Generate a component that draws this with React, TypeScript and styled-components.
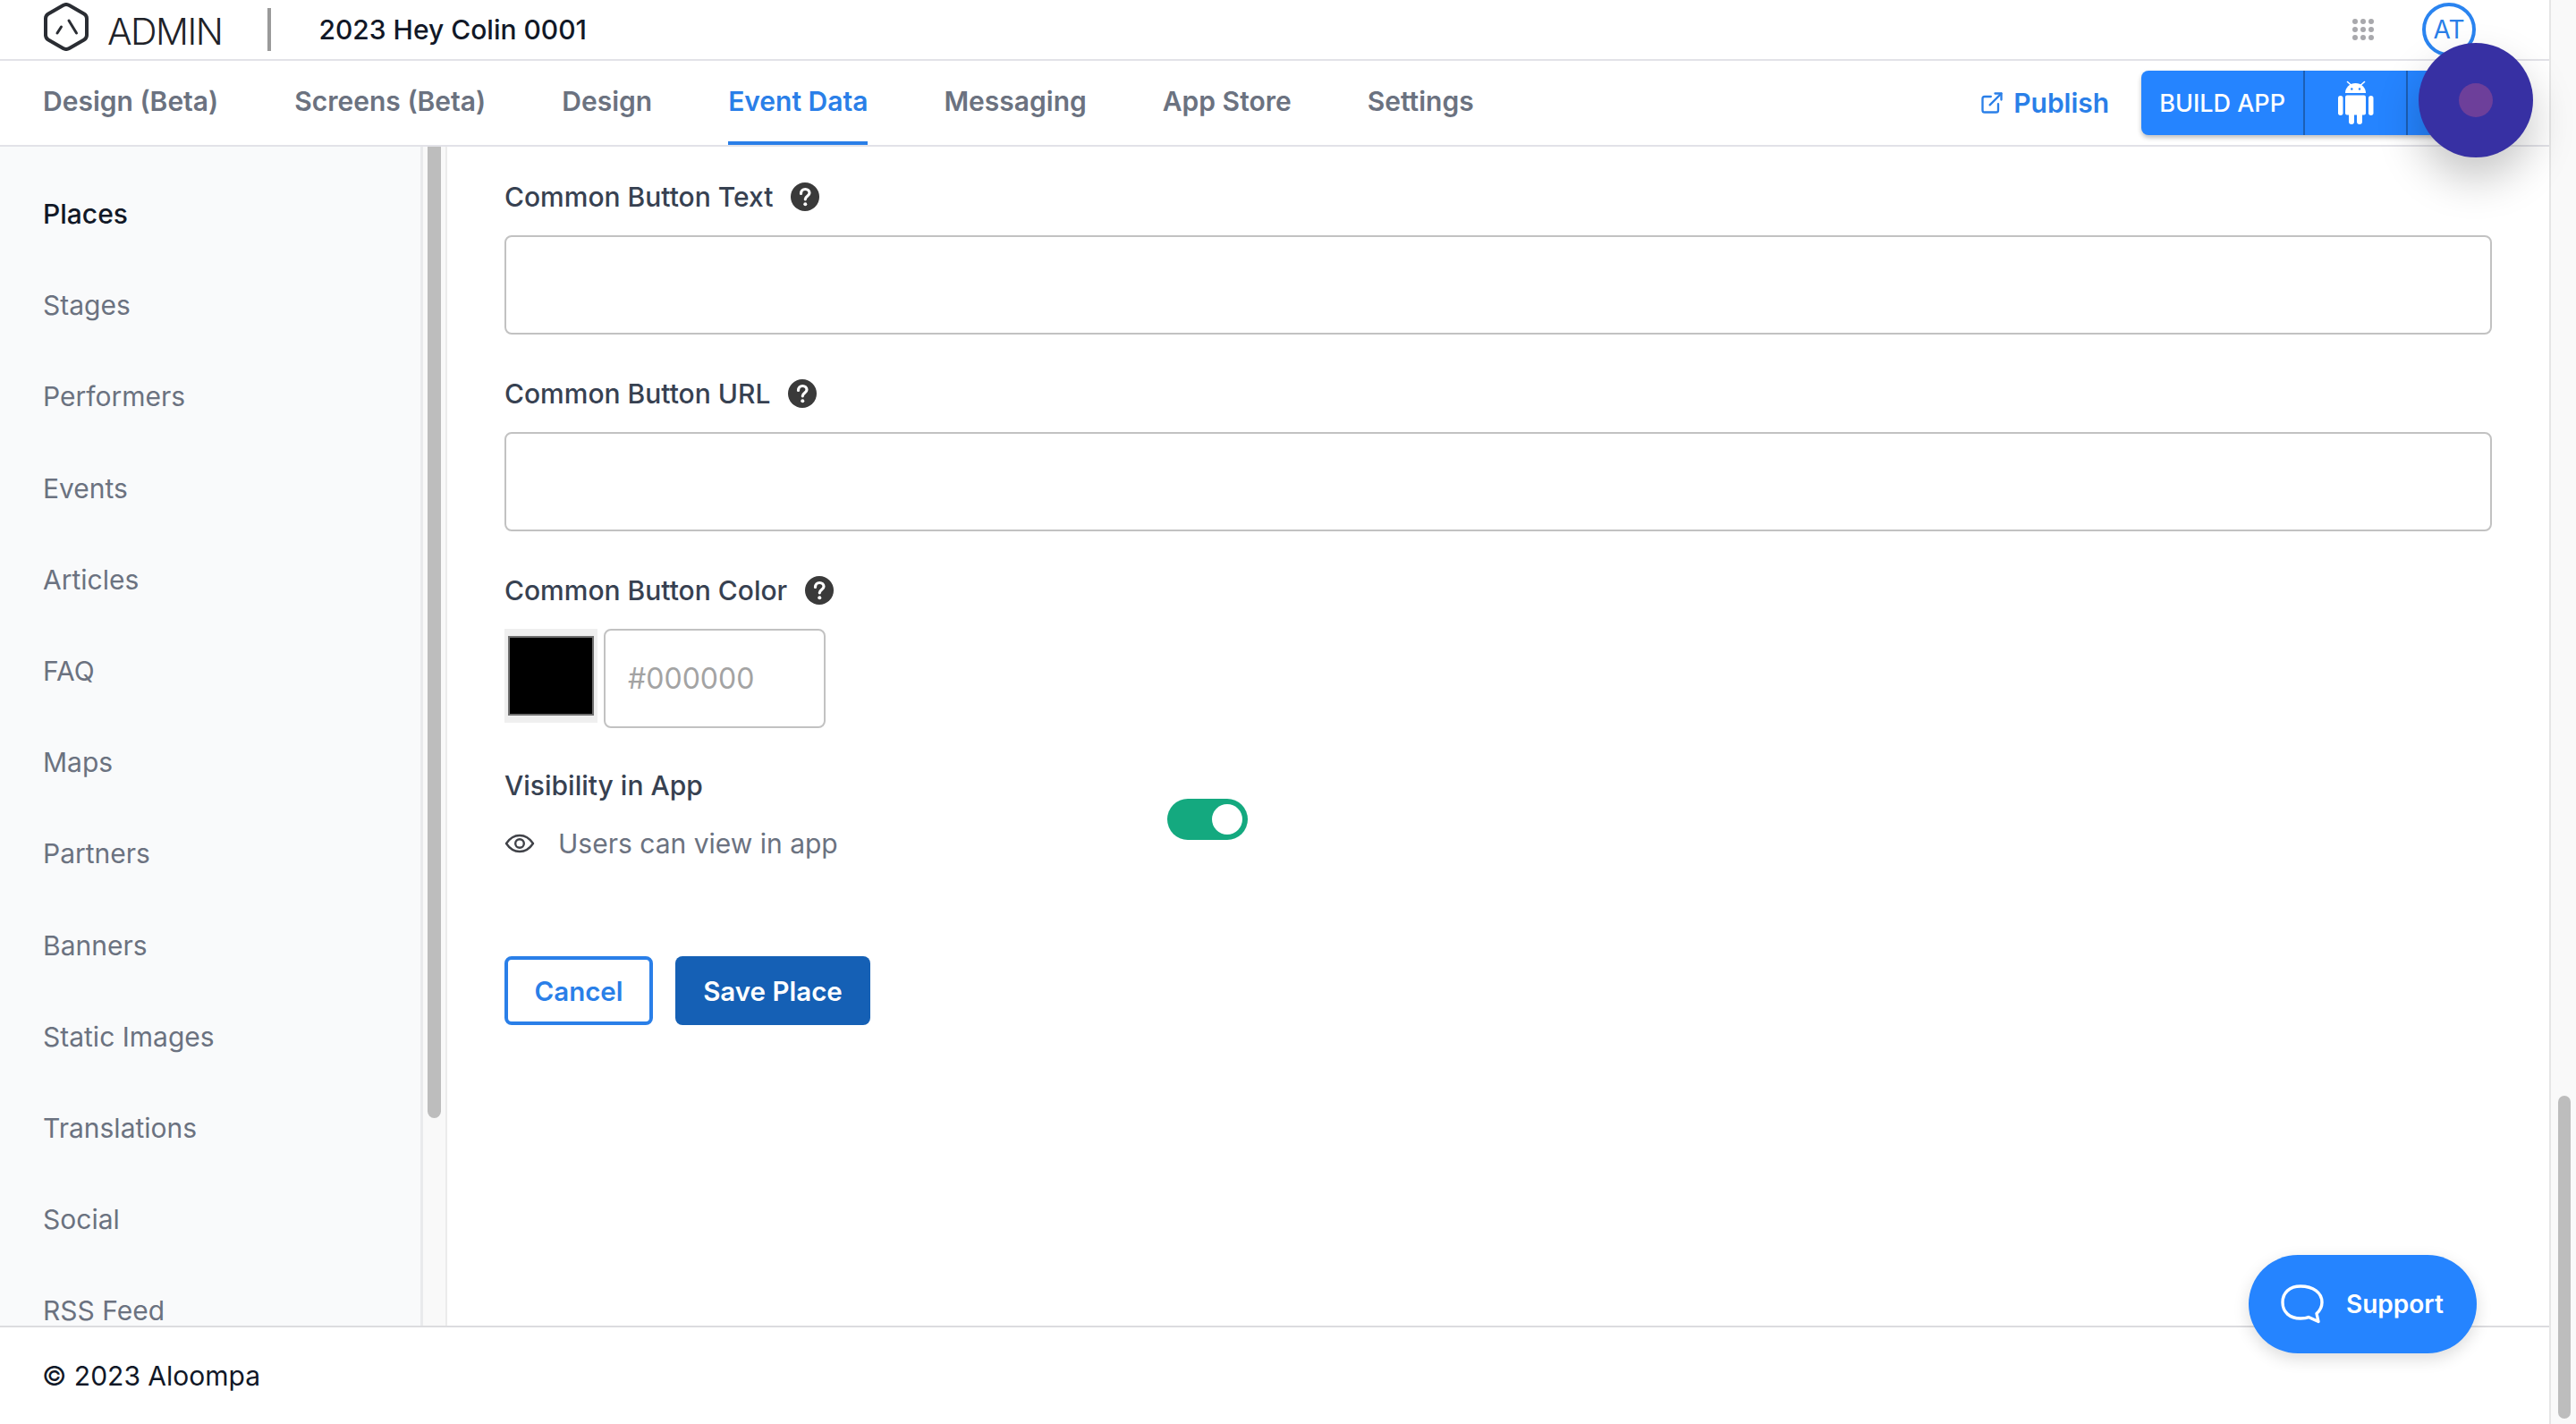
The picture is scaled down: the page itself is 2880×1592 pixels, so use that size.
import * as React from "react";
import styled, { createGlobalStyle } from "styled-components";
import { ExternalLink } from "lucide-react";

const GlobalStyle = createGlobalStyle`
  html, body, #root {
    margin: 0;
    height: 100%;
    background: #ffffff;
  }
  body {
    overflow: hidden;
    font-family: Inter, "Noto Sans", sans-serif;
  }
  * {
    box-sizing: border-box;
  }
`;

const Page = styled("div")`
  position: relative;
  display: flex;
  width: 2880px;
  height: 1592px;
  overflow: hidden;
`;

const Shell = styled("div")`
  display: flex;
  flex-direction: column;
  width: 2850px;
  height: 100%;
`;

const PageTrack = styled("div")`
  width: 30px;
  height: 100%;
  padding: 1225px 6px 6px 8px;
  background: #f9f9f9;
  border-left: 2px solid #e6e6e6;
`;

const Thumb = styled("div")`
  height: 100%;
  border-radius: 8px;
  background: #bdbdbd;
`;

const TopBar = styled("header")`
  display: flex;
  align-items: center;
  flex: none;
  height: 68px;
  padding: 0 82px 0 47px;
  border-bottom: 2px solid #e2e2e8;
`;

const Brand = styled("div")`
  display: flex;
  align-items: center;
  gap: 19px;
  padding-right: 51px;
`;

const LogoMark = styled("svg")`
  margin-top: -6px;
`;

const BrandName = styled("span")`
  padding-top: 4px;
  font-size: 41px;
  font-weight: 300;
  letter-spacing: -1.5px;
  color: #1f2329;
`;

const Divider = styled("div")`
  width: 4px;
  height: 48px;
  background: #9a9a9a;
`;

const EventTitle = styled("div")`
  margin-left: 53px;
  font-size: 30px;
  font-weight: 500;
  color: #111827;
`;

const TopActions = styled("div")`
  display: flex;
  align-items: center;
  gap: 54px;
  margin-left: auto;
`;

const AppsGrid = styled("div")`
  display: grid;
  grid-template-columns: repeat(3, 6px);
  grid-auto-rows: 6px;
  gap: 3px;
`;

const AppsDot = styled("span")`
  border-radius: 50%;
  background: #a8a8ac;
`;

const Avatar = styled("div")`
  display: flex;
  align-items: center;
  justify-content: center;
  width: 60px;
  height: 60px;
  border: 4px solid #2a84f0;
  border-radius: 50%;
  font-size: 28px;
  color: #2a7fe8;
`;

const NavBar = styled("nav")`
  display: flex;
  align-items: stretch;
  flex: none;
  height: 96px;
  padding: 0 0 0 48px;
  border-bottom: 2px solid #e2e2e8;
`;

const NavTabs = styled("div")`
  display: flex;
  gap: 85px;
`;

const NavTab = styled("a")<{ $active?: boolean }>`
  display: flex;
  align-items: center;
  height: 94px;
  font-size: 30px;
  font-weight: 600;
  color: ${({ $active }) => ($active ? "#2a7fe8" : "#6b7280")};
  border-bottom: 4px solid ${({ $active }) => ($active ? "#2a7fe8" : "transparent")};
`;

const PublishLink = styled("a")`
  display: flex;
  align-items: center;
  gap: 10px;
  margin-left: auto;
  font-size: 30px;
  font-weight: 600;
  color: #2a7fe8;
`;

const BuildGroup = styled("div")`
  display: flex;
  align-self: center;
  height: 72px;
  margin-left: 36px;
  margin-right: 45px;
  border-radius: 8px;
  background: #2584ff;
  box-shadow: 0 3px 5px rgba(0, 0, 0, 0.25);
  color: #ffffff;
`;

const BuildLabel = styled("div")`
  display: flex;
  align-items: center;
  padding: 0 20px;
  font-size: 27px;
  font-weight: 500;
`;

const BuildPlatform = styled("div")`
  display: flex;
  align-items: center;
  justify-content: center;
  width: 115px;
  border-left: 2px solid #1c5fb5;
`;

const Body = styled("div")`
  display: flex;
  flex: 1;
  min-height: 0;
`;

const Sidebar = styled("aside")`
  width: 473px;
  padding-top: 24px;
  overflow: hidden;
  background: #f9fafb;
  border-right: 3px solid #e9eaec;
`;

const SideItem = styled("div")<{ $active?: boolean }>`
  display: flex;
  align-items: center;
  flex: none;
  height: 102.2px;
  padding-left: 48px;
  font-size: 30px;
  font-weight: ${({ $active }) => ($active ? 500 : 400)};
  color: ${({ $active }) => ($active ? "#111827" : "#6b7280")};
`;

const SideTrack = styled("div")`
  width: 27px;
  padding: 0 5px 232px 5px;
  background: #f9f9f9;
  border-right: 2px solid #ececec;
`;

const SideThumb = styled("div")`
  height: 100%;
  border-radius: 0 0 8px 8px;
  background: #bdbdbd;
`;

const Main = styled("main")`
  flex: 1;
  padding: 32px 64px 0;
  overflow: hidden;
`;

const Field = styled("div")`
  margin-bottom: 42px;
`;

const FieldLabel = styled("label")`
  display: flex;
  align-items: center;
  gap: 20px;
  height: 48px;
  margin-bottom: 19px;
  font-size: 30px;
  font-weight: 500;
  color: #374151;
`;

const TextBox = styled("input")`
  display: block;
  width: 100%;
  height: 111px;
  padding: 0 25px;
  border: 2px solid #c2c2c2;
  border-radius: 8px;
  background: #ffffff;
  font-family: inherit;
  font-size: 32px;

  &::placeholder {
    color: #a3a3a3;
  }
`;

const ColorRow = styled("div")`
  display: flex;
  align-items: flex-start;
  gap: 7px;
`;

const Swatch = styled("div")`
  flex: none;
  width: 104px;
  height: 105px;
  padding: 8px 4px 8px 4px;
  background: #efefef;
`;

const SwatchFill = styled("div")`
  height: 100%;
  background: #000000;
  border: 2px solid #6f6f6f;
`;

const HexBox = styled(TextBox)`
  width: 248px;
`;

const VisibilityRow = styled("div")`
  display: flex;
  align-items: center;
  margin-top: -2px;
`;

const VisibilityText = styled("div")`
  width: 741px;
`;

const VisibilityTitle = styled("div")`
  display: flex;
  align-items: center;
  height: 48px;
  margin-bottom: 17px;
  font-size: 30px;
  font-weight: 500;
  color: #374151;
`;

const VisibilityNote = styled("div")`
  display: flex;
  align-items: center;
  gap: 26px;
  height: 48px;
  font-size: 30px;
  color: #6b7280;
`;

const Toggle = styled("div")`
  display: flex;
  align-items: center;
  justify-content: flex-end;
  width: 90px;
  height: 46px;
  margin-top: 10px;
  padding-right: 6px;
  border-radius: 23px;
  background: #14a97f;
`;

const ToggleKnob = styled("span")`
  width: 34px;
  height: 34px;
  border-radius: 50%;
  background: #ffffff;
`;

const Actions = styled("div")`
  display: flex;
  gap: 25px;
  margin-top: 102px;
`;

const ActionButton = styled("button")<{ $primary?: boolean }>`
  height: 77px;
  padding: 0;
  width: ${({ $primary }) => ($primary ? "218px" : "166px")};
  border: ${({ $primary }) => ($primary ? "none" : "4px solid #2a7fe8")};
  border-radius: 8px;
  background: ${({ $primary }) => ($primary ? "#1560b5" : "#ffffff")};
  color: ${({ $primary }) => ($primary ? "#ffffff" : "#2a7fe8")};
  font-family: inherit;
  font-size: 29.5px;
  font-weight: 600;
`;

const Footer = styled("footer")`
  display: flex;
  align-items: center;
  flex: none;
  height: 110px;
  padding: 0 0 0 47px;
  border-top: 2px solid #dcdcdf;
  font-size: 30px;
  color: #111827;
`;

const RecordButton = styled("div")`
  position: absolute;
  left: 2704px;
  top: 48px;
  display: flex;
  align-items: center;
  justify-content: center;
  width: 128px;
  height: 128px;
  border-radius: 50%;
  background: #3730a3;
  box-shadow: 0 24px 48px rgba(0, 0, 0, 0.22);
`;

const RecordDot = styled("span")`
  width: 38px;
  height: 38px;
  border-radius: 50%;
  background: #6d3f9a;
`;

const SupportButton = styled("div")`
  position: absolute;
  left: 2514px;
  top: 1403px;
  display: flex;
  align-items: center;
  gap: 25px;
  width: 255px;
  height: 110px;
  padding-left: 36px;
  border-radius: 55px;
  background: #2584ff;
  box-shadow: 0 6px 18px rgba(0, 0, 0, 0.14);
  font-size: 28px;
  font-weight: 600;
  color: #ffffff;
`;

const places = [
  "Places",
  "Stages",
  "Performers",
  "Events",
  "Articles",
  "FAQ",
  "Maps",
  "Partners",
  "Banners",
  "Static Images",
  "Translations",
  "Social",
  "RSS Feed",
];

const tabs = ["Design (Beta)", "Screens (Beta)", "Design", "Event Data", "Messaging", "App Store", "Settings"];

const Logo = () => (
  <LogoMark width="54" height="54" viewBox="0 0 54 54" fill="none" stroke="#2a2d33" strokeWidth="4" strokeLinecap="round" strokeLinejoin="round">
    <path d="M23.500 3a7 7 0 0 1 7 0L47 12.500a6 6 0 0 1 3 5.200v18.600a6 6 0 0 1-3 5.200L30.500 51a7 7 0 0 1-7 0L7 41.500a6 6 0 0 1-3-5.200V17.700a6 6 0 0 1 3-5.200z" />
    <path d="M17 34l4.500-7M30 20l8.500 14" strokeWidth="3" />
  </LogoMark>
);

const AndroidIcon = () => (
  <svg width="40" height="50" viewBox="0 0 40 50" fill="#ffffff">
    <path d="M8 14a11.500 11 0 0 1 23 0z" />
    <path d="M10.500 1.500l4 3.500M29.500 1.500l-4 3.500" stroke="#ffffff" strokeWidth="1.600" strokeLinecap="round" />
    <circle cx="15.300" cy="9.500" r="1.200" fill="#2584ff" />
    <circle cx="24" cy="9.500" r="1.200" fill="#2584ff" />
    <rect x="8" y="16.500" width="23" height="22" rx="2" />
    <rect x="0" y="17" width="5.500" height="22" rx="2.750" />
    <rect x="34" y="17" width="5.500" height="22" rx="2.750" />
    <rect x="12" y="34" width="6" height="15" rx="3" />
    <rect x="21" y="34" width="6" height="15" rx="3" />
  </svg>
);

const EyeIcon = () => (
  <svg width="34" height="22" viewBox="0 0 34 22" fill="none" stroke="#404248" strokeWidth="2.400" strokeLinejoin="round">
    <path d="M2 11C6 5 11 2 17 2s11 3 15 9c-4 6-9 9-15 9S6 17 2 11z" />
    <circle cx="17" cy="11" r="4.800" />
  </svg>
);

const ChatIcon = () => (
  <svg width="48" height="44" viewBox="0 0 48 44" fill="none" stroke="#ffffff" strokeWidth="3.400" strokeLinejoin="round">
    <path d="M22 2C10 2 2 9 2 20s8 18 20 18c4 0 7-.5 9-1.500l11 5-2-9c4-3.500 6-7.500 6-12.500C46 9 36 2 22 2z" />
  </svg>
);

const HelpIcon = () => (
  <svg width="32" height="32" viewBox="0 0 32 32">
    <circle cx="16" cy="16" r="16" fill="#3a3a3a" />
    <path d="M11.500 12.500c0-3 2-5 4.800-5 2.700 0 4.700 1.800 4.700 4.300 0 3.500-4.700 3.500-4.700 7" fill="none" stroke="#ffffff" strokeWidth="3.200" strokeLinecap="round" />
    <circle cx="16.300" cy="24.300" r="2" fill="#ffffff" />
  </svg>
);

export default function App(): JSX.Element {
  return (
    <Page>
      <GlobalStyle />
      <Shell>
        <TopBar>
          <Brand>
            <Logo />
            <BrandName>ADMIN</BrandName>
          </Brand>
          <Divider />
          <EventTitle>2023 Hey Colin 0001</EventTitle>
          <TopActions>
            <AppsGrid>
              {Array.from({ length: 9 }).map((_, i) => (
                <AppsDot key={i} />
              ))}
            </AppsGrid>
            <Avatar>AT</Avatar>
          </TopActions>
        </TopBar>
        <NavBar>
          <NavTabs>
            {tabs.map((tab) => (
              <NavTab key={tab} $active={tab === "Event Data"}>
                {tab}
              </NavTab>
            ))}
          </NavTabs>
          <PublishLink>
            <ExternalLink size={28} strokeWidth={2} />
            Publish
          </PublishLink>
          <BuildGroup>
            <BuildLabel>BUILD APP</BuildLabel>
            <BuildPlatform>
              <AndroidIcon />
            </BuildPlatform>
            <BuildPlatform />
          </BuildGroup>
        </NavBar>
        <Body>
          <Sidebar>
            {places.map((item) => (
              <SideItem key={item} $active={item === "Places"}>
                {item}
              </SideItem>
            ))}
          </Sidebar>
          <SideTrack>
            <SideThumb />
          </SideTrack>
          <Main>
            <Field>
              <FieldLabel>
                Common Button Text
                <HelpIcon />
              </FieldLabel>
              <TextBox />
            </Field>
            <Field>
              <FieldLabel>
                Common Button URL
                <HelpIcon />
              </FieldLabel>
              <TextBox />
            </Field>
            <Field>
              <FieldLabel>
                Common Button Color
                <HelpIcon />
              </FieldLabel>
              <ColorRow>
                <Swatch>
                  <SwatchFill />
                </Swatch>
                <HexBox placeholder="#000000" />
              </ColorRow>
            </Field>
            <VisibilityRow>
              <VisibilityText>
                <VisibilityTitle>Visibility in App</VisibilityTitle>
                <VisibilityNote>
                  <EyeIcon />
                  Users can view in app
                </VisibilityNote>
              </VisibilityText>
              <Toggle>
                <ToggleKnob />
              </Toggle>
            </VisibilityRow>
            <Actions>
              <ActionButton>Cancel</ActionButton>
              <ActionButton $primary>Save Place</ActionButton>
            </Actions>
          </Main>
        </Body>
        <Footer>© 2023 Aloompa</Footer>
      </Shell>
      <PageTrack>
        <Thumb />
      </PageTrack>
      <RecordButton>
        <RecordDot />
      </RecordButton>
      <SupportButton>
        <ChatIcon />
        Support
      </SupportButton>
    </Page>
  );
}
